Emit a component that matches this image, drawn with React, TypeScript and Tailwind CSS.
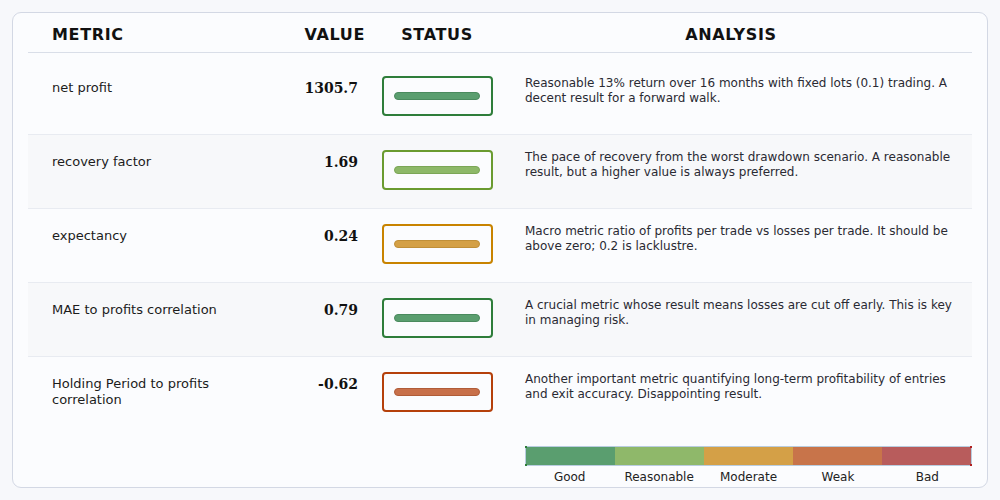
const FONT = { fontFamily: '"DejaVu Sans", "Noto Sans", sans-serif' };
const SERIF = { fontFamily: '"DejaVu Serif", "Liberation Serif", serif' };

type Level = "good" | "reasonable" | "moderate" | "weak";

const STATUS: Record<Level, { box: string; bar: string }> = {
  good: { box: "border-[#2e7d3a]", bar: "bg-[#5a9e6f] border-[#4a8a5e]" },
  reasonable: { box: "border-[#6a9b30]", bar: "bg-[#8db868] border-[#7ba656]" },
  moderate: { box: "border-[#c88300]", bar: "bg-[#d4a046] border-[#c08f38]" },
  weak: { box: "border-[#b5400b]", bar: "bg-[#c8704a] border-[#b05c38]" },
};

const ROWS: { metric: string; value: string; level: Level; analysis: string }[] = [
  {
    metric: "net profit",
    value: "1305.7",
    level: "good",
    analysis:
      "Reasonable 13% return over 16 months with fixed lots (0.1) trading. A decent result for a forward walk.",
  },
  {
    metric: "recovery factor",
    value: "1.69",
    level: "reasonable",
    analysis:
      "The pace of recovery from the worst drawdown scenario. A reasonable result, but a higher value is always preferred.",
  },
  {
    metric: "expectancy",
    value: "0.24",
    level: "moderate",
    analysis:
      "Macro metric ratio of profits per trade vs losses per trade. It should be above zero; 0.2 is lacklustre.",
  },
  {
    metric: "MAE to profits correlation",
    value: "0.79",
    level: "good",
    analysis:
      "A crucial metric whose result means losses are cut off early. This is key in managing risk.",
  },
  {
    metric: "Holding Period to profits correlation",
    value: "-0.62",
    level: "weak",
    analysis:
      "Another important metric quantifying long-term profitability of entries and exit accuracy. Disappointing result.",
  },
];

const LEGEND = [
  { label: "Good", color: "bg-[#5a9e6f]" },
  { label: "Reasonable", color: "bg-[#8fb86a]" },
  { label: "Moderate", color: "bg-[#d4a047]" },
  { label: "Weak", color: "bg-[#c8744a]" },
  { label: "Bad", color: "bg-[#b85c5c]" },
];

function StatusBox({ level }: { level: Level }) {
  const s = STATUS[level];
  return (
    <div
      className={`flex h-10 w-[111px] items-center justify-center rounded-[4px] border-2 bg-[#fbfcfe] ${s.box}`}
    >
      <div className={`h-2 w-[86px] rounded-full border ${s.bar}`} />
    </div>
  );
}

export default function App() {
  return (
    <div className="h-[500px] w-[1000px] bg-[#f7f8fb] p-3" style={FONT}>
      <div className="flex h-[476px] flex-col rounded-[9px] border border-[#d3d8e4] bg-[#fbfcfe] px-[15px]">
        {/* header */}
        <div className="flex h-10 flex-none items-center border-b border-[#d9dee8] pt-1 text-[16px] font-bold tracking-[0.04em] text-[#111]">
          <div className="w-[242px] pl-6">METRIC</div>
          <div className="w-[102px] pr-[7px] text-right">VALUE</div>
          <div className="w-[130px] text-center">STATUS</div>
          <div className="flex-1 pr-3 text-center">ANALYSIS</div>
        </div>

        <div className="mt-2 flex flex-col">
          {ROWS.map((r, i) => (
            <div
              key={r.metric}
              className={`flex h-[74px] items-start border-b border-[#e8ebf1] pt-[15px] last:border-b-0 ${
                i % 2 === 1 ? "bg-[#f7f8fa]" : ""
              }`}
            >
              <div className="w-[242px] pt-1 pl-6 pr-10 text-[13px] leading-4 text-[#1c1c1c]">{r.metric}</div>
              <div
                className="w-[102px] pt-1 pr-[14px] text-right text-[14px] font-bold leading-4 text-[#111]"
                style={SERIF}
              >
                {r.value}
              </div>
              <div className="flex w-[130px] justify-center">
                <StatusBox level={r.level} />
              </div>
              <div className="flex-1 pl-[23px] pr-4 text-[12px] leading-[15px] text-[#2a2a33]">{r.analysis}</div>
            </div>
          ))}
        </div>

        {/* legend */}
        <div className="mt-[15px] flex pl-[497px]">
          <div className="flex-1">
            <div className="relative flex h-[20px] border border-[#b9cde0]">
              {LEGEND.map((l) => (
                <div key={l.label} className={`flex-1 ${l.color}`} />
              ))}
              <span className="absolute -left-px -top-px h-[2px] w-[2px] bg-[#2e7d3a]" />
              <span className="absolute -bottom-px -left-px h-[2px] w-[2px] bg-[#2e7d3a]" />
              <span className="absolute -right-px -top-px h-[2px] w-[2px] bg-[#b02020]" />
              <span className="absolute -bottom-px -right-px h-[2px] w-[2px] bg-[#b02020]" />
            </div>
            <div className="mt-[3px] flex text-[12px] leading-4 text-[#222]">
              {LEGEND.map((l) => (
                <div key={l.label} className="flex-1 text-center">
                  {l.label}
                </div>
              ))}
            </div>
          </div>
        </div>
      </div>
    </div>
  );
}
